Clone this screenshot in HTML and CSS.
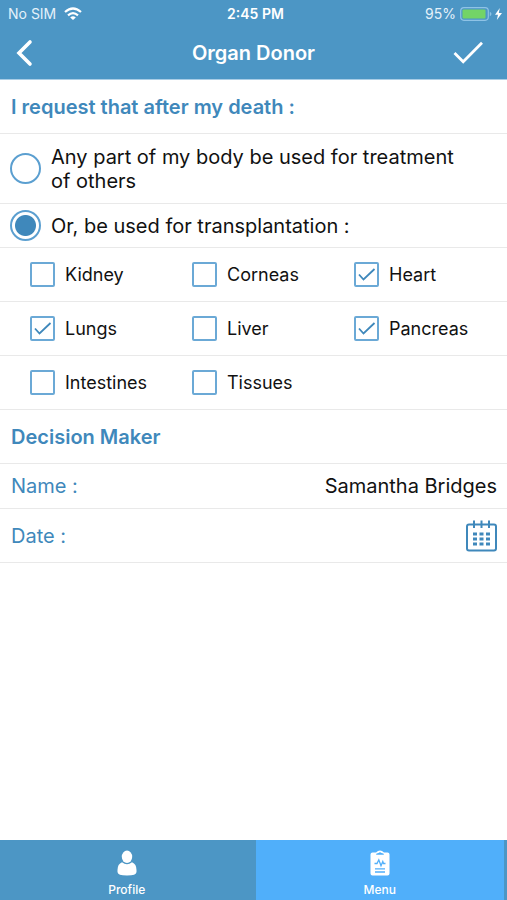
FILE: index.html
```html
<!DOCTYPE html>
<html lang="en">
<head>
<meta charset="utf-8">
<meta name="viewport" content="width=device-width, initial-scale=1">
<title>Organ Donor</title>
<link rel="stylesheet" href="styles.css">
</head>
<body>
<header class="top">
  <div class="status">
    <div class="status-left">
      <span>No SIM</span>
      <svg width="18" height="14" viewBox="0 0 18 14" fill="none" stroke="#fff" stroke-width="2.2" aria-hidden="true">
        <path d="M1 5Q9-2 17 5"/><path d="M4 8.400Q9 4 14 8.400"/><path d="M9 13L6.200 10.400Q9 8 11.800 10.400Z" fill="#fff" stroke="none"/>
      </svg>
    </div>
    <div class="clock">2:45 PM</div>
    <div class="status-right">
      <span>95%</span>
      <svg width="43" height="14" viewBox="0 0 43 14" aria-hidden="true">
        <rect x=".7" y=".7" width="27.600" height="12.600" rx="3.200" fill="none" stroke="#8fc3e6" stroke-width="1.200"/>
        <rect x="2.500" y="2.500" width="23" height="9" rx="1" fill="#73d467"/>
        <path d="M29.800 4.800Q31.500 5.500 31.500 7T29.800 9.200Z" fill="#8fc3e6"/>
        <path d="M39.800 1L35 7.800H38L36.800 13L42 6H38.800Z" fill="#fff"/>
      </svg>
    </div>
  </div>
  <div class="titlebar">
    <button class="icon-button" type="button" aria-label="Back">
      <svg width="30" height="30" viewBox="0 0 30 30" fill="none" stroke="#fff" stroke-width="3.600" stroke-linecap="round" stroke-linejoin="miter"><path d="M20 4L9 15L20 26"/></svg>
    </button>
    <h1>Organ Donor</h1>
    <button class="icon-button icon-button-end" type="button" aria-label="Save">
      <svg width="30" height="30" viewBox="0 0 30 30" fill="none" stroke="#fff" stroke-width="2.800"><path d="M1.500 15L10.200 23.700L29 4.800"/></svg>
    </button>
  </div>
</header>

<main>
  <h2 class="row heading">I request that after my death :</h2>
  <label class="row choice choice-tall">
    <input class="radio" type="radio" name="request">
    <span>Any part of my body be used for treatment of others</span>
  </label>
  <label class="row choice">
    <input class="radio" type="radio" name="request" checked>
    <span>Or, be used for transplantation :</span>
  </label>
  <div class="row organs">
    <label class="organ"><input class="check" type="checkbox">Kidney</label>
    <label class="organ"><input class="check" type="checkbox">Corneas</label>
    <label class="organ"><input class="check" type="checkbox" checked>Heart</label>
  </div>
  <div class="row organs">
    <label class="organ"><input class="check" type="checkbox" checked>Lungs</label>
    <label class="organ"><input class="check" type="checkbox">Liver</label>
    <label class="organ"><input class="check" type="checkbox" checked>Pancreas</label>
  </div>
  <div class="row organs">
    <label class="organ"><input class="check" type="checkbox">Intestines</label>
    <label class="organ"><input class="check" type="checkbox">Tissues</label>
  </div>
  <h2 class="row heading">Decision Maker</h2>
  <div class="row field">
    <label for="name">Name :</label>
    <input class="text" id="name" type="text" value="Samantha Bridges">
  </div>
  <div class="row field field-date">
    <label for="date">Date :</label>
    <button class="icon-button" id="date" type="button" aria-label="Date">
      <svg width="32" height="32" viewBox="0 0 32 32" fill="none" stroke="#3f88bb" stroke-width="2">
        <rect x="2" y="4.500" width="29" height="26" rx="2"/>
        <path d="M9 .5V8M16.500 .5V8M24 .5V8"/>
        <path d="M8 14H25M8 19H25M8 24H25" stroke-width="3" stroke-dasharray="4 2.500"/>
      </svg>
    </button>
  </div>
</main>

<nav class="tabs">
  <a class="tab" href="#profile">
    <svg width="20" height="26" viewBox="0 0 20 26" fill="#fff" aria-hidden="true">
      <ellipse cx="10" cy="6.800" rx="5.200" ry="6.200"/>
      <path d="M5 12.200Q10 16.500 15 12.200Q19.500 14 19.500 20V22Q19.500 25.500 10 25.500T.5 22V20Q.5 14 5 12.200Z"/>
    </svg>
    <span>Profile</span>
  </a>
  <a class="tab tab-active" href="#menu" aria-current="page">
    <svg width="20" height="26" viewBox="0 0 20 26" fill="none" stroke="#50affa" aria-hidden="true">
      <path d="M2.500 2.500H6Q8 .5 10 .5T14 2.500H17.500Q19.500 2.500 19.500 4.500V23.500Q19.500 25.500 17.500 25.500H2.500Q.5 25.500 .5 23.500V4.500Q.5 2.500 2.500 2.500Z" fill="#fff" stroke="none"/>
      <path d="M6 4.800Q6 3 8.500 3Q10 1.500 11.500 3Q14 3 14 4.800Z" fill="#50affa" stroke="none"/>
      <path d="M4.500 13.500H7L8.800 9.800L11 15.800L12.800 11.500L13.500 13.500H15.500" stroke-width="1.300"/>
      <path d="M5 18.800H15M5 22H15" stroke-width="1.300"/>
    </svg>
    <span>Menu</span>
  </a>
</nav>
</body>
</html>
```
FILE: styles.css
```css
* {
  box-sizing: border-box;
}

body {
  margin: 0;
  min-height: 100vh;
  display: flex;
  flex-direction: column;
  background: #fff;
  color: #111;
  font-family: Inter, "Liberation Sans", sans-serif;
  font-size: 20px;
  line-height: 24px;
}

main {
  flex: 1;
}

h1,
h2 {
  margin: 0;
  font-size: 20px;
  font-weight: 600;
}

input,
button {
  margin: 0;
  padding: 0;
  border: 0;
  background: none;
  color: inherit;
  font: inherit;
}

svg {
  display: block;
}

.top {
  background: #4c96c5;
  border-bottom: 1px solid #a9cde6;
  color: #fff;
}

.status {
  display: grid;
  grid-template-columns: 1fr auto 1fr;
  align-items: center;
  height: 26px;
  padding: 2px 4px 0 8px;
  font-size: 14px;
  color: #e4f1fa;
}

.status-left,
.status-right {
  display: flex;
  align-items: center;
  gap: 8px;
}

.status-right {
  justify-content: flex-end;
  gap: 4px;
}

.clock {
  color: #fff;
  font-weight: 600;
}

.titlebar {
  display: grid;
  grid-template-columns: 1fr auto 1fr;
  align-items: center;
  height: 53px;
  padding: 0 10px;
}

.icon-button {
  justify-self: start;
  cursor: pointer;
}

.icon-button-end {
  justify-self: end;
  padding-right: 14px;
}

.row {
  display: flex;
  align-items: center;
  min-height: 54px;
  padding: 0 10px 0 11px;
  border-bottom: 1px solid #e9e9e9;
}

.heading {
  color: #3f88bb;
}

.choice {
  gap: 10px;
  min-height: 44px;
  padding: 0 48px 0 10px;
}

.choice-tall {
  min-height: 70px;
}

.radio,
.check {
  appearance: none;
  flex: none;
}

.radio {
  width: 31px;
  height: 31px;
  border: 2px solid #5b9fd0;
  border-radius: 50%;
}

.radio:checked {
  background: radial-gradient(circle, #3f88bb 10px, #fff 11px);
}

.organs {
  display: grid;
  grid-template-columns: repeat(3, 1fr);
  column-gap: 9px;
  padding: 0 0 0 30px;
}

.organ {
  display: flex;
  align-items: center;
  gap: 10px;
  font-size: 18px;
}

.check {
  width: 25px;
  height: 25px;
  border: 2px solid #6ba9d6;
  border-radius: 2px;
}

.check:checked {
  background: url("data:image/svg+xml,%3Csvg xmlns='http://www.w3.org/2000/svg' viewBox='0 0 21 21' fill='none' stroke='%233f88bb' stroke-width='1.800'%3E%3Cpath d='M3 10.500L7.500 15.500L18.500 5'/%3E%3C/svg%3E") center / 21px 21px no-repeat;
}

.field {
  justify-content: space-between;
  gap: 16px;
  min-height: 45px;
  color: #3f88bb;
}

.field-date {
  min-height: 54px;
}

.text {
  flex: 1;
  min-width: 0;
  color: #111;
  text-align: right;
}

.tabs {
  display: grid;
  grid-template-columns: 1fr 1fr;
  gap: 4px;
  background: #4c96c5;
}

.tab {
  display: flex;
  flex-direction: column;
  align-items: center;
  gap: 6px;
  height: 60px;
  padding: 10px 0 0 2px;
  color: #fff;
  font-size: 12px;
  font-weight: 500;
  line-height: 16px;
  text-decoration: none;
}

.tab-active {
  margin-right: 3px;
  padding-left: 0;
  background: #50affa;
}
```
